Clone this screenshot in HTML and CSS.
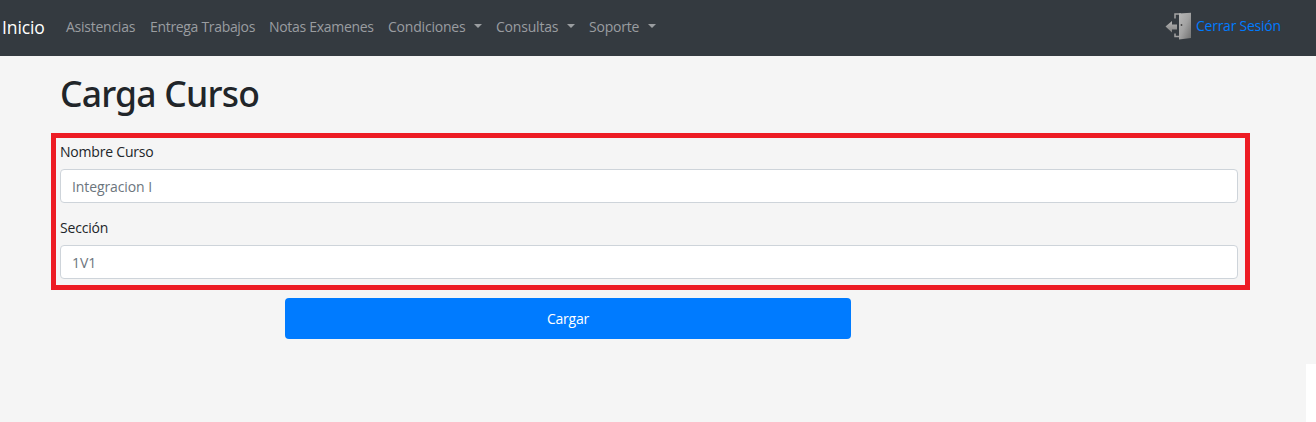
FILE: index.html
```html
<!DOCTYPE html>
<html lang="es">
<head>
<meta charset="utf-8">
<title>Carga Curso</title>
<link rel="stylesheet" href="styles.css">
</head>
<body>
<nav class="navbar">
  <a class="brand">Inicio</a>
  <ul class="nav">
    <li class="item asistencias">Asistencias</li>
    <li class="item entrega">Entrega Trabajos</li>
    <li class="item notas">Notas Examenes</li>
    <li class="item condiciones">Condiciones<i class="caret"></i></li>
    <li class="item consultas">Consultas<i class="caret"></i></li>
    <li class="item soporte">Soporte<i class="caret"></i></li>
  </ul>
  <a class="logout">
    <svg class="door" width="28" height="28" viewBox="0 0 28 28">
      <defs>
        <linearGradient id="panel" x1="0" y1="0" x2="1" y2="1">
          <stop offset="0" stop-color="#b8b8b8"/><stop offset=".5" stop-color="#a2a2a2"/><stop offset="1" stop-color="#707070"/>
        </linearGradient>
        <linearGradient id="arrow" x1="0" y1="0" x2="0" y2="1">
          <stop offset="0" stop-color="#b5b5b5"/><stop offset="1" stop-color="#808080"/>
        </linearGradient>
      </defs>
      <path d="M10 6.500V2H16M10 21.500V24.500H14" fill="none" stroke="#a2a2a2" stroke-width="1.500"/>
      <path d="M14 1.500L26 .700V26L14 27.500Z" fill="url(#panel)"/>
      <path d="M.500 14.500L7 9V12.500H12V17.500H7V20.500Z" fill="url(#arrow)"/>
      <circle cx="16.500" cy="13" r=".9" fill="#444"/>
    </svg>
    <span class="logout-text">Cerrar Sesión</span>
  </a>
</nav>
<main class="page">
  <h1 class="title">Carga Curso</h1>
  <form class="form">
    <div class="fields">
      <label class="label" for="nombre">Nombre Curso</label>
      <input class="control first" id="nombre" placeholder="Integracion I">
      <label class="label seccion" for="seccion">Sección</label>
      <input class="control second" id="seccion" placeholder="1V1">
    </div>
    <button class="submit" type="button">Cargar</button>
  </form>
</main>
<div class="bottom"></div>
</body>
</html>
```
FILE: styles.css
```css
* { box-sizing: border-box; }
body {
  margin: 0;
  height: 422px;
  display: flex;
  flex-direction: column;
  overflow: hidden;
  background: #fff;
  color: #212529;
  font: 14px/22px "Open Sans", "Noto Sans", sans-serif;
}
.navbar {
  height: 56px;
  display: flex;
  align-items: center;
  background: #343a40;
  padding: 0 35px 2px 2px;
}
.brand { width: 64px; color: #fff; font-size: 17.500px; letter-spacing: -.1px; }
.nav { display: flex; margin: 0; padding: 0; list-style: none; color: #9a9da0; }
.item { display: flex; align-items: center; white-space: nowrap; letter-spacing: -.2px; }
.asistencias { width: 84px; letter-spacing: -.25px; }
.entrega { width: 119px; letter-spacing: -.32px; }
.notas { width: 119px; letter-spacing: -.3px; }
.condiciones { width: 108px; }
.consultas { width: 93px; }
.caret {
  margin: 0 14px 2px auto;
  border: 4px solid transparent;
  border-top-color: currentColor;
  border-bottom: 0;
}
.soporte { width: 81px; }
.logout {
  display: flex;
  align-items: center;
  gap: 3px;
  margin: 0 0 3px auto;
  color: #007bff;
}
.logout-text { width: 85px; white-space: nowrap; letter-spacing: -.25px; }
.page { height: 308px; padding: 14px 66px 0 51px; background: #f5f5f5; }
.title {
  margin: 0 0 16px 9px;
  font: 500 35.500px/47px "Noto Sans", sans-serif;
  letter-spacing: -.8px;
}
.form { display: flex; flex-direction: column; }
.fields {
  display: flex;
  flex-direction: column;
  height: 157px;
  padding: 3px 7px 0 4px;
  border: 5px solid #ed1c24;
}
.label { height: 28px; letter-spacing: -.2px; }
.control {
  height: 34px;
  padding: 1px 11px;
  border: 1px solid #ced4da;
  border-radius: 4px;
  background: #fff;
  font: inherit;
  letter-spacing: -.1px;
}
.control::placeholder { color: #6c757d; opacity: 1; }
.seccion { margin-top: 14px; }
.submit {
  width: 566px;
  height: 41px;
  margin: 8px 0 0 234px;
  border: 0;
  border-radius: 4px;
  background: #007bff;
  color: #fff;
  font: inherit;
  letter-spacing: -.2px;
}
.bottom { flex: 1; margin-right: 10px; background: #f5f5f5; }
```
